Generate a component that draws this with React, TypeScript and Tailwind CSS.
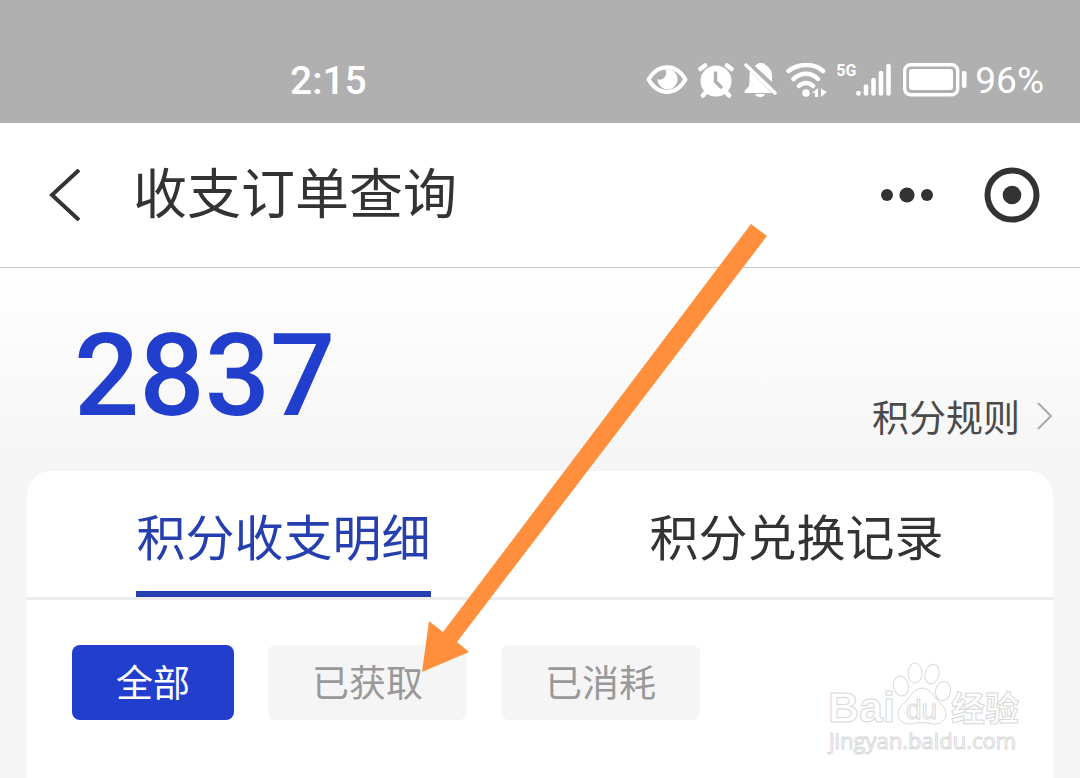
import { useState } from 'react';
import clsx from 'clsx';

const tabs = ['积分收支明细', '积分兑换记录'];
const filters = ['全部', '已获取', '已消耗'];

function StatusBar() {
  return (
    <div className="flex h-[123px] items-end justify-between bg-[#b0b0b0] pr-9 pb-6 pl-[290px] font-[Roboto,sans-serif] text-white">
      <span className="text-[39px] leading-9 font-medium">2:15</span>
      <div className="flex h-9 items-center">
        {/* eye comfort */}
        <svg className="mr-2.5 h-9 w-[42px]" viewBox="0 0 42 36" fill="none">
          <path d="M2.500 16.500C12 0 30 0 39.500 16.500C30 33 12 33 2.500 16.500Z" stroke="currentColor" strokeWidth="4" strokeLinejoin="round" />
          <path d="M19 6.500A10 10 0 1 1 11.500 16C16 19 23 12 19 6.500Z" fill="currentColor" />
        </svg>
        {/* alarm */}
        <svg className="mr-2.5 h-9 w-9" viewBox="0 0 36 36" fill="none">
          <circle cx="18" cy="18" r="15.500" fill="currentColor" />
          <path d="M2.500 6L7 2.500M33.500 6L29 2.500M8 29L5 32.500M28 29L31 32.500" stroke="currentColor" strokeWidth="4.500" strokeLinecap="round" />
          <path d="M17.500 10V18.500L23 24" stroke="#b0b0b0" strokeWidth="3.500" strokeLinecap="round" />
        </svg>
        {/* muted bell */}
        <svg className="mr-2 h-9 w-[34px]" viewBox="0 0 34 36" fill="none">
          <path d="M11 3C13 2 13 0 17 0C21 0 21 2 23 3C27 6 28 9 28 13V19Z" fill="currentColor" />
          <path d="M6 8L28 30H2C0 30 0 27.500 2 26.500L5 23C6 18 5 13 6 8Z" fill="currentColor" />
          <path d="M11 31H21C20 35 12 35 11 31Z" fill="currentColor" />
          <path d="M2 2L31 30" stroke="currentColor" strokeWidth="3.500" strokeLinecap="round" />
        </svg>
        {/* wifi */}
        <svg className="mr-2 h-9 w-[42px]" viewBox="0 0 42 36" fill="none">
          <path d="M2.500 8C13 0 28 0 37 8M7.500 16C15 9 25 9 32 16M13 23C17 19 23 19 27 23" stroke="currentColor" strokeWidth="4.500" strokeLinecap="round" />
          <circle cx="20" cy="30" r="3.800" fill="currentColor" />
          <path d="M26 30L32 25V34H29V30ZM35 25V34L41 29L37 27Z" fill="currentColor" />
        </svg>
        <span className="self-start text-base leading-4 font-bold">5G</span>
        <svg className="mr-3 h-9 w-[35px]" viewBox="0 0 35 36" fill="none">
          <path d="M2.500 30V30.500M10 23.500V30.500M17.500 17V30.500M25 10V30.500M32.500 3V30.500" stroke="currentColor" strokeWidth="4.600" strokeLinecap="round" />
        </svg>
        <svg className="mr-2 h-9 w-16" viewBox="0 0 64 36" fill="none">
          <rect x="1.700" y="1.700" width="53" height="30" rx="6" stroke="currentColor" strokeWidth="3.400" />
          <rect x="6" y="6" width="44" height="21" rx="3" fill="currentColor" />
          <rect x="59" y="8" width="4.500" height="17" rx="2" fill="currentColor" />
        </svg>
        <span className="text-[37px] leading-9">96%</span>
      </div>
    </div>
  );
}

function NavBar() {
  return (
    <header className="flex h-[145px] items-center border-b border-[#c8c8c8] bg-white pr-10 pl-12 text-[#333]">
      <button type="button" aria-label="返回">
        <svg className="h-[52px] w-8" viewBox="0 0 32 52" fill="none">
          <path d="M31 1L4 26L31 51" stroke="currentColor" strokeWidth="4" />
        </svg>
      </button>
      <h1 className="ml-[53px] flex-1 pb-2 text-[54px] leading-[54px]">收支订单查询</h1>
      <button type="button" aria-label="更多" className="mr-[50px]">
        <svg className="h-4 w-[54px]" viewBox="0 0 54 16" fill="currentColor">
          <circle cx="7" cy="8" r="6" />
          <circle cx="27" cy="8" r="7.600" />
          <circle cx="47" cy="8" r="6" />
        </svg>
      </button>
      <button type="button" aria-label="关闭">
        <svg className="h-14 w-14" viewBox="0 0 56 56" fill="none">
          <circle cx="28" cy="28" r="24.500" stroke="currentColor" strokeWidth="6" />
          <circle cx="28" cy="28" r="9.300" fill="currentColor" />
        </svg>
      </button>
    </header>
  );
}

function Arrow() {
  return (
    <svg className="pointer-events-none absolute top-[222px] left-[420px] h-[452px] w-[350px]" viewBox="420 222 350 452">
      <path d="M751 224L767 236L457 642L469 652L422 672L429 621L443 632Z" fill="#ff8f3c" />
    </svg>
  );
}

function Watermark() {
  return (
    <svg
      className="pointer-events-none absolute right-[26px] bottom-[18px] h-[102px] w-[200px]"
      viewBox="0 0 200 102"
      fill="#fff"
      stroke="#d8d8d8"
      strokeWidth="1"
    >
      <text x="1" y="64" fontSize="43" fontWeight="700" fontFamily="Liberation Sans">Bai</text>
      <ellipse cx="74" cy="28" rx="7.500" ry="10" transform="rotate(-12 74 28)" />
      <ellipse cx="88" cy="15" rx="7" ry="10" />
      <ellipse cx="105" cy="16" rx="7" ry="10" transform="rotate(14 105 16)" />
      <ellipse cx="116" cy="33" rx="7.500" ry="9.500" transform="rotate(14 116 33)" />
      <path d="M95 30C104 30 107 40 114 46C124 55 118 67 106 66C98 64 91 64 84 66C72 67 66 55 76 46C84 40 85 31 95 30Z" />
      <text x="79" y="61" fontSize="28" fontWeight="400" fontFamily="Liberation Sans">du</text>
      <text x="124" y="63" fontSize="34" fontWeight="700">经验</text>
      <text x="2" y="91" fontSize="22" fontFamily="Open Sans">jingyan.baidu.com</text>
    </svg>
  );
}

export default function App() {
  const [tab, setTab] = useState(0);
  const [filter, setFilter] = useState(0);

  return (
    <div className="relative flex min-h-screen flex-col bg-[#f5f5f5] font-['Noto_Sans_CJK_SC',sans-serif]">
      <StatusBar />
      <NavBar />
      <section className="flex h-[203px] items-start justify-between bg-linear-to-b from-white to-[#f5f5f5] pr-[26px] pl-[74px]">
        <p className="mt-12 font-[Roboto,sans-serif] text-[115px] leading-[120px] font-medium text-[#213ecc]">2837</p>
        <a href="#rules" className="mt-[128px] flex items-center gap-4 text-[37px] leading-10 text-[#4a4a4a]">
          积分规则
          <svg className="h-7 w-[18px]" viewBox="0 0 18 28" fill="none">
            <path d="M2 1L15 14L2 27" stroke="#aaa" strokeWidth="2" />
          </svg>
        </a>
      </section>
      <main className="relative mx-[27px] flex-1 rounded-t-3xl bg-white">
        <div className="grid grid-cols-2 justify-items-center border-b-[3px] border-[#ececec]">
          {tabs.map((name, i) => (
            <button
              key={name}
              type="button"
              onClick={() => setTab(i)}
              className={clsx(
                'h-[126px] border-b-[6px] pt-2 text-[49px] leading-[54px]',
                i === tab ? 'border-[#263fae] text-[#263fae]' : 'border-transparent text-[#333]'
              )}
            >
              {name}
            </button>
          ))}
        </div>
        <div className="flex gap-[34px] px-[45px] pt-[45px]">
          {filters.map((name, i) => (
            <button
              key={name}
              type="button"
              onClick={() => setFilter(i)}
              className={clsx(
                'h-[75px] rounded-lg px-11 pb-1 text-[37px] leading-10',
                i === filter ? 'bg-[#213ecc] text-white' : 'bg-[#f5f5f5] text-[#999]'
              )}
            >
              {name}
            </button>
          ))}
        </div>
        <Watermark />
      </main>
      <Arrow />
    </div>
  );
}
